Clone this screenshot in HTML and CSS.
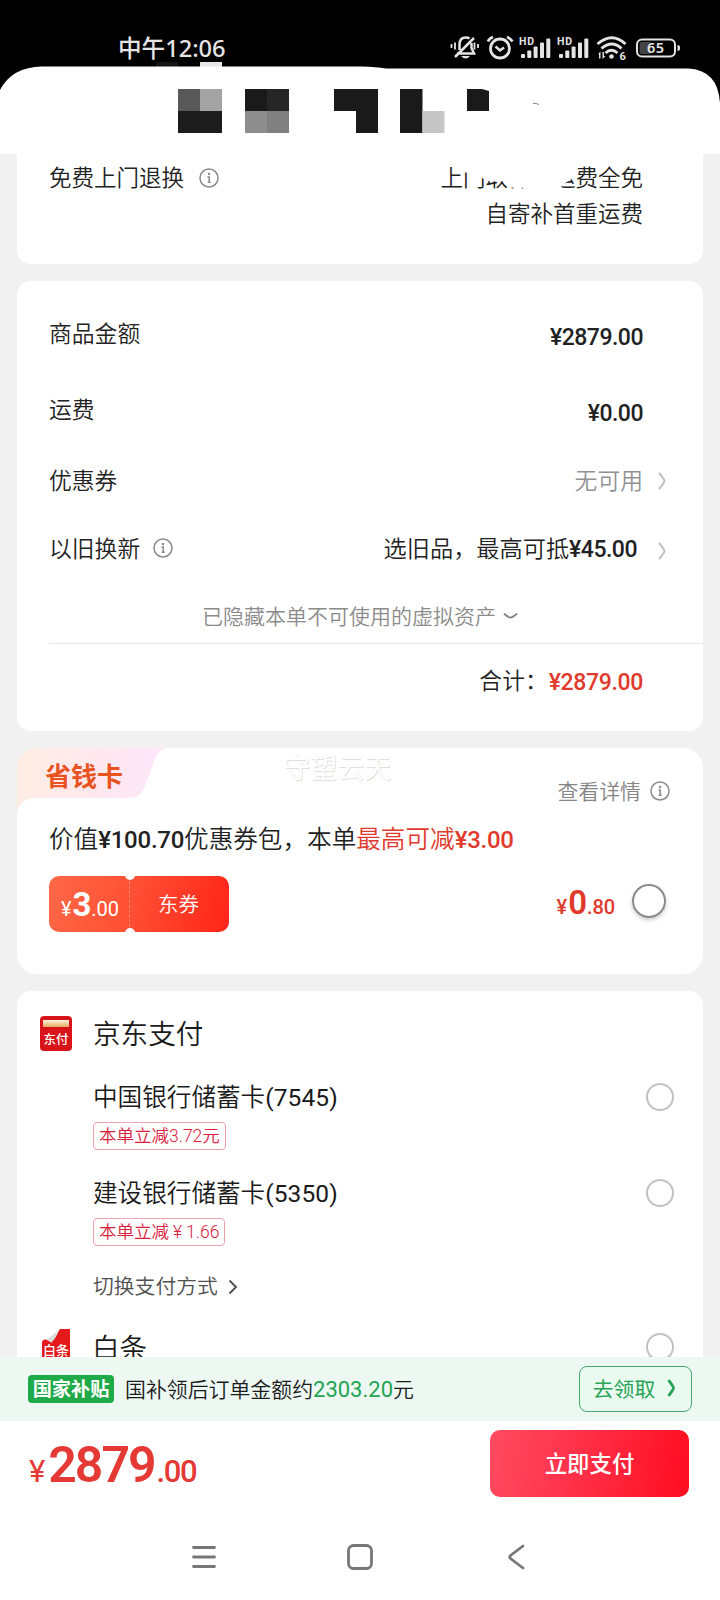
FILE: index.html
```html
<!DOCTYPE html>
<html lang="zh-CN">
<head>
<meta charset="utf-8">
<title>确认订单</title>
<link rel="stylesheet" href="styles.css">
</head>
<body>
<svg class="defs" width="0" height="0">
  <symbol id="info" viewBox="0 0 20 20"><circle cx="10" cy="10" r="9" fill="none" stroke="currentColor" stroke-width="1.5"/><circle cx="10" cy="6" r="1.2" fill="currentColor"/><path d="M8.5 9H10.2V14.200M8.7 14.200H11.700" fill="none" stroke="currentColor" stroke-width="1.5"/></symbol>
  <symbol id="chev" viewBox="0 0 8 18"><path d="M1 1C4 4.500 6.500 7.500 6.500 9S4 13.500 1 17" fill="none" stroke="currentColor" stroke-width="2.200"/></symbol>
  <symbol id="bars" viewBox="0 0 32 22"><rect x="2" y="16.500" width="4" height="4" rx="1"/><rect x="8.300" y="13" width="4" height="7.500" rx="1"/><rect x="14.600" y="9" width="4" height="11.500" rx="1"/><rect x="21" y="5" width="4" height="15.500" rx="1"/><rect x="27.300" y="1" width="4" height="19.500" rx="1"/></symbol>
</svg>
<header class="top">
  <svg class="sheet" width="720" height="154" viewBox="0 0 720 154">
    <rect x="156" y="62" width="22" height="5" fill="#141414"/><rect x="200" y="62" width="22" height="6" fill="#e6e6e6"/>
    <path d="M0 90Q12 67 42 66.500H362Q376 67 386 68.500H688Q718 70 720 103V154H0Z" fill="#fff"/>
    <rect x="178" y="89" width="22" height="22" fill="#585858"/><rect x="200" y="89" width="22" height="22" fill="#a3a3a3"/><rect x="178" y="111" width="44" height="22" fill="#1c1c1c"/>
    <rect x="245" y="89" width="22" height="22" fill="#1a1a1a"/><rect x="267" y="89" width="22" height="22" fill="#262626"/><rect x="245" y="111" width="22" height="22" fill="#8d8d8d"/><rect x="267" y="111" width="22" height="22" fill="#808080"/>
    <path d="M334 89H378V133H356V111H334ZM400 89H422.500V133H400ZM467 89H482L489 91V111H467Z" fill="#1a1a1a"/><rect x="422.500" y="111" width="22" height="22" fill="#c6c6c6"/>
    <path d="M533 103.500Q536 103 539 104.500" fill="none" stroke="#888"/>
  </svg>
  <div class="status">
    <span class="clock">中午12:06</span>
    <svg class="sysicons" width="232" height="28" viewBox="0 0 232 28" fill="#e4e4e4">
      <g fill="none" stroke="#e4e4e4" stroke-width="2"><path d="M7 18.500H22M9.500 15V9.500Q9.500 2.500 16 2.500Q18 2.500 19.500 3.500M21.500 8V13L24 18.500H15M5 22L24 3" stroke-width="2.500"/><path d="M5 7.500V14.500M1.500 9V13M24.500 7.500V14.500M28 9V13" stroke-width="1.800"/></g><path d="M11 21H20Q15.500 26 11 21Z"/>
      <g fill="none" stroke="#e4e4e4" stroke-width="2.800"><circle cx="50" cy="13.500" r="9.500"/><path d="M45.500 11.500L50 15.500L54 12.500" stroke-width="2.500"/><path d="M38 6.500Q39 3.500 43 2M57 2Q60.500 3.500 62.500 6.500"/></g>
      <g font-family="Roboto" font-weight="700" font-size="10.500"><text x="69" y="10" textLength="15">HD</text><text x="107" y="10" textLength="15">HD</text></g>
      <use href="#bars" x="69" y="2.500" width="32" height="22"/><use href="#bars" x="107" y="2.500" width="32" height="22"/>
      <g fill="none" stroke="#e4e4e4" stroke-width="2.900"><path d="M147.500 9Q162-3.500 175.500 9M151.500 13.500Q162 4.500 171.500 13.500M155.500 18Q161.500 12.500 167.500 18"/></g><circle cx="161.500" cy="21.500" r="2.300"/><path d="M148 19L150.500 16.500V23.500H149V19ZM152.500 17H154V21H155.500L152.500 24Z"/><text x="169.500" y="25" font-family="Roboto" font-weight="700" font-size="11">6</text>
      <rect x="187" y="4.500" width="38" height="17" rx="5" fill="none" stroke="#e4e4e4" stroke-width="2"/><path d="M191.500 7H200.500V19H191.500Q189.500 19 189.500 17V9Q189.500 7 191.500 7Z" fill="#444"/><path d="M227.500 10Q230 10 230 12V14Q230 16 227.500 16Z"/><text x="197" y="18" font-family="Noto Sans" font-weight="600" font-size="14.500" textLength="17">65</text>
    </svg>
  </div>
</header>

<main class="list">
  <section class="card returns">
    <div class="lab">免费上门退换<svg class="info gap-l"><use href="#info"/></svg></div>
    <div class="policy"><div>上门取件，运费全免<svg class="smear" width="120" height="36" viewBox="0 0 120 36"><path d="M5 3V12L20 16L28 21L46 21.500L53 27.500L72 28V33H101L103 25L116 17V3Z" fill="#fff"/></svg></div><div>自寄补首重运费</div></div>
  </section>

  <section class="card amounts">
    <div class="row tall"><span class="txt">商品金额</span><b class="num drop">¥2879.00</b></div>
    <div class="row tall"><span class="txt">运费</span><b class="num drop">¥0.00</b></div>
    <div class="row mid"><span class="txt">优惠券</span><span class="txt muted">无可用</span><svg class="chev"><use href="#chev"/></svg></div>
    <div class="row trade"><span class="lab"><span class="txt">以旧换新</span><svg class="info"><use href="#info"/></svg></span><span class="offer">选旧品，最高可抵<b class="num">¥45.00</b></span><svg class="chev low"><use href="#chev"/></svg></div>
    <div class="hidden-note">已隐藏本单不可使用的虚拟资产<svg width="15" height="8" viewBox="0 0 15 8"><path d="M1 1.500Q5 5.500 7.500 5.500T14 1.500" fill="none" stroke="#888" stroke-width="1.900"/></svg></div>
    <div class="total"><span class="txt">合计：</span><b class="num red">¥2879.00</b></div>
  </section>

  <section class="card saver">
    <svg class="tab" width="150" height="67" viewBox="0 0 150 67"><defs><linearGradient id="tg"><stop offset="0" stop-color="#ffece3"/><stop offset=".55" stop-color="#fee8ef"/><stop offset="1" stop-color="#fde6fa"/></linearGradient></defs><path d="M0 0H150Q142 1 138 11L127 40Q123 50 112 50H18Q2 50 0 67Z" fill="url(#tg)"/></svg>
    <div class="saver-head"><strong>省钱卡</strong><em>守望云天</em><span>查看详情<svg class="info"><use href="#info"/></svg></span></div>
    <div class="value">价值<b class="num">¥100.70</b>优惠券包，本单<span class="red">最高可减<b class="num">¥3.00</b></span></div>
    <div class="coupon-row">
      <div class="coupon"><div class="price"><i>¥</i><b>3</b><i>.00</i></div><div class="kind">东券</div></div>
      <div class="price red"><i>¥</i><b>0</b><i>.80</i></div>
      <div class="radio big"></div>
    </div>
  </section>

  <section class="card pay">
    <div class="method"><div class="jd"><div class="slot"></div><span>东付</span></div><h2>京东支付</h2></div>
    <div class="bank"><div><div class="name">中国银行储蓄卡<span>(7545)</span></div><div class="tag">本单立减3.72元</div></div><div class="radio"></div></div>
    <div class="bank"><div><div class="name">建设银行储蓄卡<span>(5350)</span></div><div class="tag">本单立减<span class="yen">¥</span>1.66</div></div><div class="radio"></div></div>
    <div class="switch">切换支付方式<svg width="10" height="16" viewBox="0 0 10 16"><path d="M1.500 1.500L8 8L1.500 14.500" fill="none" stroke="#555" stroke-width="2"/></svg></div>
    <div class="method baitiao"><div class="bt"><svg width="28" height="36" viewBox="0 0 28 36"><path d="M18 0H28V36H0V14Q0 10 4 10.500L9 13Z" fill="#e3191b"/><path d="M5 10.500L17 1Q15 8 9 14Q8 11 5 10.500Z" fill="#ddd"/></svg><span>白条</span></div><h2>白条</h2><div class="radio"></div></div>
  </section>
</main>

<div class="subsidy"><strong>国家补贴</strong><span>国补领后订单金额约<b>2303.20</b>元</span><button>去领取<svg width="9" height="18" viewBox="0 0 9 18"><path d="M1.500 1C4 4.500 6.500 7.500 6.500 9S4 13.500 1.500 17" fill="none" stroke="#27a355" stroke-width="2.800"/></svg></button></div>
<div class="checkout"><div class="sum"><i>¥</i><b>2879</b><i class="dec">.00</i></div><button>立即支付</button></div>
<nav>
  <svg width="24" height="24" viewBox="0 0 24 24"><path d="M1.500 2.500H22.500M1.500 12H22.500M1.500 21.500H22.500"/></svg>
  <svg class="home" width="26" height="26" viewBox="0 0 26 26"><rect x="1.500" y="1.500" width="23" height="23" rx="5"/></svg>
  <svg width="17" height="26" viewBox="0 0 17 26"><path d="M15 2L2.500 11.500Q1 13 2.500 14.500L15 24"/></svg>
</nav>
</body>
</html>
```
FILE: styles.css
```css
* { box-sizing: border-box; }
body { margin: 0; width: 720px; height: 1600px; overflow: hidden; display: flex; flex-direction: column; background: #f1f1f1; color: #222; font-family: "Noto Sans CJK SC", sans-serif; font-size: 22.5px; line-height: 36px; white-space: nowrap; font-weight: 350; }
.defs { position: absolute; }
i, em { font-style: normal; }
button { font-family: inherit; padding: 0; }
.red { color: #df3a2c; }
.muted { color: #929292; }
.num { font-family: Roboto, "Noto Sans CJK SC", sans-serif; font-weight: 500; font-size: 23px; letter-spacing: -.5px; }

.top { position: relative; height: 154px; flex: none; background: #000; }
.sheet { position: absolute; inset: 0; }
.status { position: relative; display: flex; justify-content: space-between; padding: 30px 38px 0 118px; color: #e4e4e4; }
.clock { font-family: "Noto Sans", "Noto Sans CJK SC", sans-serif; font-size: 23.6px; font-weight: 500; letter-spacing: 0; }
.sysicons { margin-top: 5px; }

.list { flex: 1; min-height: 0; overflow: hidden; display: flex; flex-direction: column; gap: 17px; padding: 0 17px; }
.card { flex: none; background: #fff; border-radius: 14px; width: 686px; }
.info { width: 20px; height: 20px; color: #8b8b8b; margin-left: 13px; }
.info.gap-l { margin: 3px 0 0 15px; }
.lab { display: flex; align-items: center; }

.returns { height: 110px; display: flex; justify-content: space-between; align-items: flex-start; padding: 4px 60px 0 32px; border-radius: 0 0 14px 14px; }
.policy { text-align: right; }
.policy div { position: relative; }
.smear { position: absolute; left: 19px; top: 2px; }

.amounts { height: 450px; padding: 15px 0 0 32px; font-size: 22.8px; }
.row { display: flex; align-items: center; padding-right: 60px; position: relative; }
.row > :nth-child(2) { margin-left: auto; }
.txt { padding-bottom: 3px; }
.tall { height: 76px; }
.mid { height: 65px; }
.mid .txt { padding-bottom: 1px; }
.trade { height: 70px; }
.trade .txt { padding-bottom: 1px; }
.drop { padding-top: 8px; }
.row .chev { margin: 0 -23px 0 15px; }
.chev { width: 8px; height: 18px; color: #c4c4c4; }
.row.trade .chev { margin-left: 21px; }
.low { position: relative; top: 3px; }
.offer { font-size: 23.2px; }
.hidden-note { height: 61px; padding: 14px 32px 0 0; text-align: center; font-size: 21px; color: #8b8b8b; border-bottom: 1px solid #e6e6e6; }
.hidden-note svg { margin-left: 7px; vertical-align: 4px; }
.total { display: flex; justify-content: flex-end; align-items: center; height: 74px; padding-right: 60px; }
.total .num { padding-top: 3px; margin-left: 1px; letter-spacing: -.35px; }

.saver { position: relative; height: 226px; border-radius: 20px; overflow: hidden; padding: 0 0 0 32px; }
.tab { position: absolute; left: 0; top: 0; }
.saver-head { position: relative; display: flex; height: 71px; }
.saver-head strong { width: 238px; margin-left: -4px; padding-top: 9px; font-size: 26px; font-weight: 700; color: #e8531f; }
.saver-head em { padding-top: 1px; font-size: 27px; color: #fff; font-weight: 400; text-shadow: 1px 1px 1px #ddd, 0 0 1px #e8e8e8; }
.saver-head span { display: flex; align-items: center; margin-left: auto; padding: 22px 33px 0 0; height: 61px; font-size: 20.9px; color: #858585; }
.saver-head .info { margin: 2px 0 0 9px; }
.value { font-size: 24.6px; }
.value .num { font-size: 24px; letter-spacing: -.25px; }
.coupon-row { display: flex; align-items: center; margin-top: 18px; height: 56px; }
.coupon { position: relative; width: 180px; height: 56px; display: flex; border-radius: 10px; color: #fff; background: linear-gradient(105deg, #ff6847, #ff5034 45%, #ff2419); margin-right: auto; }
.coupon::before, .coupon::after { content: ""; position: absolute; left: 76px; width: 10px; height: 5px; background: #fff; }
.coupon::before { top: -1px; border-radius: 0 0 5px 5px; }
.coupon::after { bottom: -1px; border-radius: 5px 5px 0 0; }
.coupon .price { width: 81px; padding: 0 0 0 12px; height: 56px; border-right: 1px dashed #ff8a72; }
.kind { flex: 1; text-align: center; font-size: 20.6px; line-height: 54px; padding-right: 2px; }
.price { font-family: Roboto, sans-serif; line-height: 58px; font-size: 20px; letter-spacing: -.1px; padding-top: 2px; }
.price i { font-weight: 500; }
.price b { font-size: 33px; font-weight: 600; letter-spacing: -1px; margin: 0 1px; }
.coupon .price i { font-weight: 400; }
.coupon .price b { font-weight: 700; }
.radio { width: 28px; height: 28px; border: 2px solid #c2c2c2; border-radius: 50%; flex: none; }
.radio.big { width: 34px; height: 34px; border: 2.5px solid #8a8a8a; margin: -6px 37px 0 17px; box-shadow: 0 2px 4px #ccc; }

.pay { height: 500px; padding: 24px 29px 0 23px; }
.method { display: flex; align-items: center; height: 36px; }
h2 { margin: 0; padding-bottom: 2px; font-size: 27.6px; font-weight: 350; line-height: 36px; color: #1a1a1a; }
.jd { width: 32px; height: 35px; margin-right: 21px; background: #d7141a; border-radius: 4px; padding: 4px 3px 0; color: #fff; font-size: 12.4px; line-height: 17px; font-weight: 500; text-align: center; }
.slot { height: 7px; background: linear-gradient(#fff3dc, #e2ac62); margin-bottom: 4px; }
.jd span { display: block; }
.bank { display: flex; justify-content: space-between; align-items: flex-start; height: 96px; padding-left: 53px; }
.method + .bank { margin-top: 27px; }
.name { font-size: 24.6px; line-height: 36px; margin-top: -1px; color: #1a1a1a; }
.name span { font-family: Roboto, sans-serif; font-size: 24.5px; font-weight: 400; letter-spacing: .1px; }
.bank .radio { margin-top: 5px; }
.tag { width: max-content; margin: 6px 0 0; padding: 0 5px; border: 1px solid #eda0ab; border-radius: 4px; font-size: 17.5px; line-height: 26px; color: #d9213c; font-family: Roboto, "Noto Sans CJK SC", sans-serif; font-weight: 350; }
.yen { padding: 0 4px; }
.switch { height: 34px; padding-left: 53px; font-size: 20.8px; line-height: 34px; color: #4f4f4f; margin-top: -2px; }
.switch svg { margin-left: 10px; vertical-align: -1px; }
.baitiao { margin-top: 27px; }
.baitiao .radio { margin-left: auto; }
.bt { position: relative; width: 28px; height: 36px; margin: 0 22px 0 2px; }
.bt span { position: absolute; left: 1px; top: 12px; font-size: 13px; line-height: 18px; font-weight: 500; color: #fff; }

.subsidy { position: relative; flex: none; height: 64px; display: flex; align-items: center; padding: 0 28px 1px; background: #edf8f2; font-size: 20.9px; color: #1a1a1a; }
.subsidy strong { width: 86px; height: 28px; margin-right: 11px; border-radius: 4px; background: #1faa49; color: #fff; text-align: center; font-size: 19.2px; line-height: 27px; font-weight: 700; }
.subsidy b { font-family: Roboto, sans-serif; font-weight: 400; font-size: 22px; color: #22a552; }
.subsidy button { width: 113px; height: 46px; margin-left: auto; padding: 0 2px 2px 0; border: 1.500px solid #45a870; border-radius: 8px; background: #eafaf1; color: #27a355; font-size: 20.8px; font-weight: 400; display: flex; align-items: center; justify-content: center; gap: 12px; }
.checkout { flex: none; height: 93px; background: #fff; display: flex; justify-content: space-between; padding: 9px 31px 0 29px; }
.sum { font-family: Roboto, sans-serif; color: #e53935; font-size: 31px; line-height: 70px; letter-spacing: -1px; }
.sum b { font-size: 50px; font-weight: 600; letter-spacing: -2px; margin: 0 2px 0 4px; }
.sum i { font-weight: 400; }
.sum .dec { font-weight: 500; letter-spacing: -1.400px; }
.checkout button { width: 199px; height: 67px; padding-bottom: 4px; border: 0; border-radius: 10px; background: linear-gradient(100deg, #ff4b60, #ff3048 45%, #ff0c20); color: #fff; font-size: 22.4px; font-weight: 500; }
nav { flex: none; height: 86px; background: #fff; display: flex; align-items: center; padding: 0 195px 0 192px; justify-content: space-between; }
nav .home { margin-right: 4px; }
nav svg { fill: none; stroke: #777; stroke-width: 2.800; stroke-linecap: round; }
```
